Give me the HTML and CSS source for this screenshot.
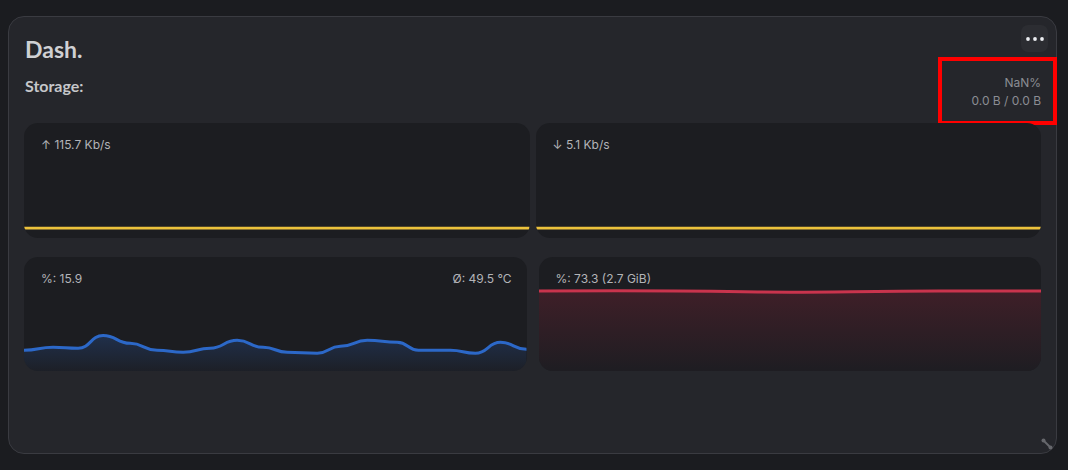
FILE: index.html
```html
<!DOCTYPE html>
<html>
<head>
	<meta charset="utf-8">
	<title>Dash.</title>
	<link rel="stylesheet" href="styles.css">
</head>
<body>

<div class="card">
	<button class="menu" aria-label="menu">
		<svg width="18" height="6" viewBox="0 0 18 6"><circle cx="2" cy="3" r="1.9"/><circle cx="9" cy="3" r="1.9"/><circle cx="16" cy="3" r="1.9"/></svg>
	</button>

	<h1 class="title">Dash.</h1>

	<div class="storage-row">
		<span class="storage-label">Storage:</span>
		<div class="storage-stat">
			<div>NaN%</div>
			<div>0.0 B / 0.0 B</div>
		</div>
	</div>

	<div class="chart-row row-net">
		<div class="chart">
			<div class="chart-label"><span>↑ 115.7 Kb/s</span></div>
			<svg class="graph" viewBox="0 0 505 85" preserveAspectRatio="none">
				<path class="line-yellow" d="M0,75 L505,75"/>
			</svg>
		</div>
		<div class="chart">
			<div class="chart-label"><span>↓ 5.1 Kb/s</span></div>
			<svg class="graph" viewBox="0 0 506 85" preserveAspectRatio="none">
				<path class="line-yellow" d="M0,75 L506,75"/>
			</svg>
		</div>
	</div>

	<div class="chart-row row-sys">
		<div class="chart">
			<div class="chart-label"><span>%: 15.9</span><span>Ø: 49.5 °C</span></div>
			<svg class="graph" viewBox="0 0 502 84" preserveAspectRatio="none">
				<defs>
					<linearGradient id="cpuFill" x1="0" y1="0" x2="0" y2="1">
						<stop offset="0" stop-color="#2a5fb8" stop-opacity="0.28"/>
						<stop offset="1" stop-color="#2a5fb8" stop-opacity="0.04"/>
					</linearGradient>
				</defs>
				<path fill="url(#cpuFill)" d="M0,63 C14.5,63 14.5,60 29,60 C41.5,60 41.5,61 54,61 C66.5,61 66.5,48 79,48 C92.5,48 92.5,56 106,56 C119.5,56 119.5,63 133,63 C146,63 146,65 159,65 C172.5,65 172.5,61 186,61 C199.5,61 199.5,53 213,53 C226,53 226,60 239,60 C251,60 251,65 263,65 C278,65 278,66 293,66 C304.5,66 304.5,59 316,59 C329.5,59 329.5,53 343,53 C358,53 358,55 373,55 C383.5,55 383.5,63 394,63 C410,63 410,63 426,63 C438.5,63 438.5,66 451,66 C463.5,66 463.5,55 476,55 C489,55 489,62 502,62 L502,84 L0,84 Z"/>
				<path class="line-blue" d="M0,63 C14.5,63 14.5,60 29,60 C41.5,60 41.5,61 54,61 C66.5,61 66.5,48 79,48 C92.5,48 92.5,56 106,56 C119.5,56 119.5,63 133,63 C146,63 146,65 159,65 C172.5,65 172.5,61 186,61 C199.5,61 199.5,53 213,53 C226,53 226,60 239,60 C251,60 251,65 263,65 C278,65 278,66 293,66 C304.5,66 304.5,59 316,59 C329.5,59 329.5,53 343,53 C358,53 358,55 373,55 C383.5,55 383.5,63 394,63 C410,63 410,63 426,63 C438.5,63 438.5,66 451,66 C463.5,66 463.5,55 476,55 C489,55 489,62 502,62"/>
			</svg>
		</div>
		<div class="chart">
			<div class="chart-label"><span>%: 73.3 (2.7 GiB)</span></div>
			<svg class="graph" viewBox="0 0 503 84" preserveAspectRatio="none">
				<defs>
					<linearGradient id="memFill" x1="0" y1="0" x2="0" y2="1">
						<stop offset="0" stop-color="#3f1f28"/>
						<stop offset="1" stop-color="#1e1d22"/>
					</linearGradient>
				</defs>
				<path fill="url(#memFill)" d="M0,3 C100,2.5 150,2.5 219,4 C280,5 320,3 400,3 L503,3 L503,84 L0,84 Z"/>
				<path class="line-red" d="M0,3 C100,2.5 150,2.5 219,4 C280,5 320,3 400,3 L503,3"/>
			</svg>
		</div>
	</div>

	<svg class="resize" width="12" height="12" viewBox="0 0 12 12">
		<path d="M2.5,2.5 L9.5,9.5"/>
		<circle cx="2.5" cy="2.5" r="2"/>
		<circle cx="9.5" cy="9.5" r="2"/>
	</svg>
</div>

</body>
</html>
```

FILE: styles.css
```css
body {
	margin: 0;
	background: #1b1c20;
	font-family: Lato, "Noto Sans", sans-serif;
}

.card {
	position: relative;
	box-sizing: border-box;
	width: 1049px;
	height: 438px;
	margin: 16px 0 0 8px;
	padding: 18px 15px 0 15px;
	background: #25262b;
	border: 1px solid #3a3b41;
	border-radius: 16px;
}

.menu {
	position: absolute;
	top: 8px;
	right: 8px;
	width: 27px;
	height: 27px;
	padding: 0;
	border: none;
	border-radius: 7px;
	background: #2c2d32;
	display: flex;
	align-items: center;
	justify-content: center;
}
.menu svg { fill: #eceef2; }

.title {
	margin: 0 0 0 1px;
	font-size: 23px;
	line-height: 28px;
	font-weight: 700;
	color: #cfd0d3;
}

/* --------------- */

.storage-row {
	display: flex;
	justify-content: space-between;
	align-items: flex-start;
	margin-top: -6px;
}
.storage-label {
	margin: 19px 0 0 1px;
	font-size: 16px;
	line-height: 20px;
	font-weight: 700;
	color: #c6c7ca;
}
.storage-stat {
	box-sizing: border-box;
	width: 119px;
	margin-right: -16px;
	padding: 13px 12px 11px 0;
	border: 4px solid #ff0000;
	text-align: right;
	font-family: Inter, "Noto Sans", sans-serif;
	font-size: 12px;
	line-height: 18px;
	color: #8b8d93;
}

/* --------------- */

.chart-row {
	display: flex;
	margin-top: -2px;
}
.row-net { gap: 6px; height: 115px; }
.row-sys { gap: 12px; height: 114px; margin-top: 19px; }

.chart {
	flex: 1;
	display: flex;
	flex-direction: column;
	background: #1c1d21;
	border-radius: 14px;
	overflow: hidden;
}
.chart-label {
	display: flex;
	justify-content: space-between;
	padding: 13px 15px 0 17px;
	font-family: Inter, "Noto Sans", sans-serif;
	font-size: 12px;
	line-height: 18px;
	color: #b3b4b8;
}
.graph {
	flex: 1;
	width: 100%;
	display: block;
}
.graph path { vector-effect: non-scaling-stroke; }

.line-yellow { fill: none; stroke: #ecc23c; stroke-width: 2.6; }
.line-blue { fill: none; stroke: #2c68c8; stroke-width: 3; stroke-linejoin: round; }
.line-red { fill: none; stroke: #c9344d; stroke-width: 3; }

.resize {
	position: absolute;
	right: 3px;
	bottom: 3px;
}
.resize path { stroke: #66676c; stroke-width: 2; }
.resize circle { fill: #66676c; }
```
